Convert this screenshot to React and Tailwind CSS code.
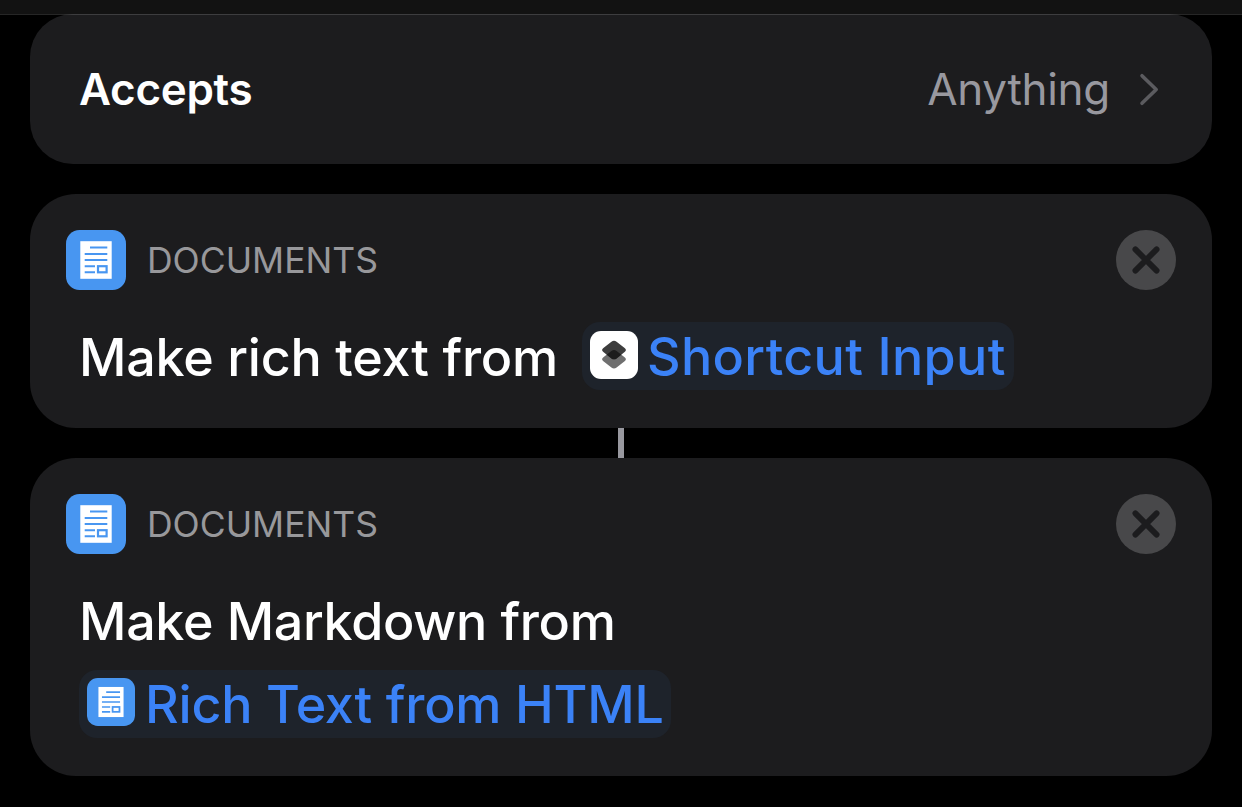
import React from "react";

function DocumentIcon({ className }) {
  return (
    <svg viewBox="0 0 60 60" className={className} aria-hidden="true">
      <rect width="60" height="60" rx="13.5" fill="#4896f1" />
      <rect x="14.3" y="11.2" width="31.4" height="37.6" fill="#fff" />
      <g fill="none" stroke="#4896f1" strokeWidth="2">
        <path d="M24 17.6H41.3M18.7 23.9H41.3M18.7 30H41.3M18.7 36.2H29M18.7 42.3H29" />
        <rect x="32" y="36.2" width="8.6" height="6.1" strokeWidth="2.2" />
      </g>
    </svg>
  );
}

const LAYER =
  "M21.4 10.8Q24 8.9 26.6 10.8L34.6 17Q37.2 19 34.6 21L26.6 27.4Q24 29.3 21.4 27.4L13.4 21Q10.8 19 13.4 17Z";

function ShortcutIcon({ className }) {
  return (
    <svg viewBox="0 0 48 48" className={className} aria-hidden="true">
      <defs>
        <clipPath id="upper-layer">
          <path d={LAYER} />
        </clipPath>
      </defs>
      <rect width="48" height="48" rx="11" fill="#fff" />
      <path d={LAYER} transform="translate(0 9.2)" fill="#6f6f6f" />
      <path d={LAYER} fill="#3d3d3d" />
      <g clipPath="url(#upper-layer)">
        <path d={LAYER} transform="translate(0 9.2)" fill="#1c1c1c" />
      </g>
    </svg>
  );
}

function ActionCard({ children }) {
  return (
    <section className="flex flex-col rounded-[46px] bg-[#1c1c1e] px-9 pt-9 pb-[38px]">
      <div className="flex h-[60px] items-center">
        <DocumentIcon className="size-[60px] shrink-0" />
        <span className="ml-[21px] pt-0.5 text-[35.5px] leading-[60px] text-[#98989b]">
          DOCUMENTS
        </span>
        <button className="ml-auto size-[60px]" aria-label="Remove action">
          <svg viewBox="0 0 60 60" className="size-[60px]">
            <circle cx="30" cy="30" r="30" fill="#48484a" />
            <path
              d="M19.4 19.4L40.6 40.6M40.6 19.4L19.4 40.6"
              stroke="#1c1c1e"
              strokeWidth="5.8"
              strokeLinecap="round"
            />
          </svg>
        </button>
      </div>
      <div className="mt-8 flex flex-col gap-4 text-[52px] leading-[70px] font-medium whitespace-nowrap text-white">
        {children}
      </div>
    </section>
  );
}

export default function App() {
  return (
    <div className="h-[807px] w-[1242px] overflow-hidden bg-black font-['Inter',sans-serif]">
      <header className="relative z-10 h-[15px] border-b border-white/15 bg-[#121212] bg-clip-padding" />
      <main className="-mt-px flex flex-col px-[30px]">
        <section className="flex h-[150px] items-center rounded-[43px] bg-[#1c1c1e] pr-[53px] pl-[49px] text-[44px]">
          <span className="font-semibold tracking-[-0.3px] text-white">Accepts</span>
          <span className="ml-auto tracking-[-0.3px] text-[#98989f]">Anything</span>
          <svg viewBox="0 0 20 34" className="ml-[29px] h-[34px] w-5" fill="none">
            <path
              d="M3 3.7L17.2 17.5L3 31.3"
              stroke="#5b5b5f"
              strokeWidth="3.6"
              strokeLinecap="round"
              strokeLinejoin="round"
            />
          </svg>
        </section>

        <div className="mt-[30px]">
          <ActionCard>
            <div className="flex h-[68px] pl-[13px]">
              <span className="w-[479px] leading-[72px] tracking-[-0.2px]">
                Make rich text from
              </span>
              <span className="ml-6 flex h-[68px] w-[432px] rounded-[18px] bg-[#1e232b] pt-[9px] pl-2">
                <ShortcutIcon className="size-12 shrink-0" />
                <span className="-mt-[9px] ml-[9px] tracking-[0.35px] text-[#3b82f7]">
                  Shortcut Input
                </span>
              </span>
            </div>
          </ActionCard>
        </div>

        <div className="h-[30px] w-1.5 self-center bg-[#98989f]" />

        <ActionCard>
          <div className="h-[68px] pl-[13px] leading-[72px] tracking-[-0.33px]">
            Make Markdown from
          </div>
          <div className="ml-[13px] flex h-[68px] w-[592px] rounded-[18px] bg-[#1e232b] pt-2 pl-2">
            <DocumentIcon className="size-12 shrink-0" />
            <span className="-mt-2 ml-2.5 tracking-[-0.2px] text-[#3b82f7]">
              Rich Text from HTML
            </span>
          </div>
        </ActionCard>
      </main>
    </div>
  );
}
